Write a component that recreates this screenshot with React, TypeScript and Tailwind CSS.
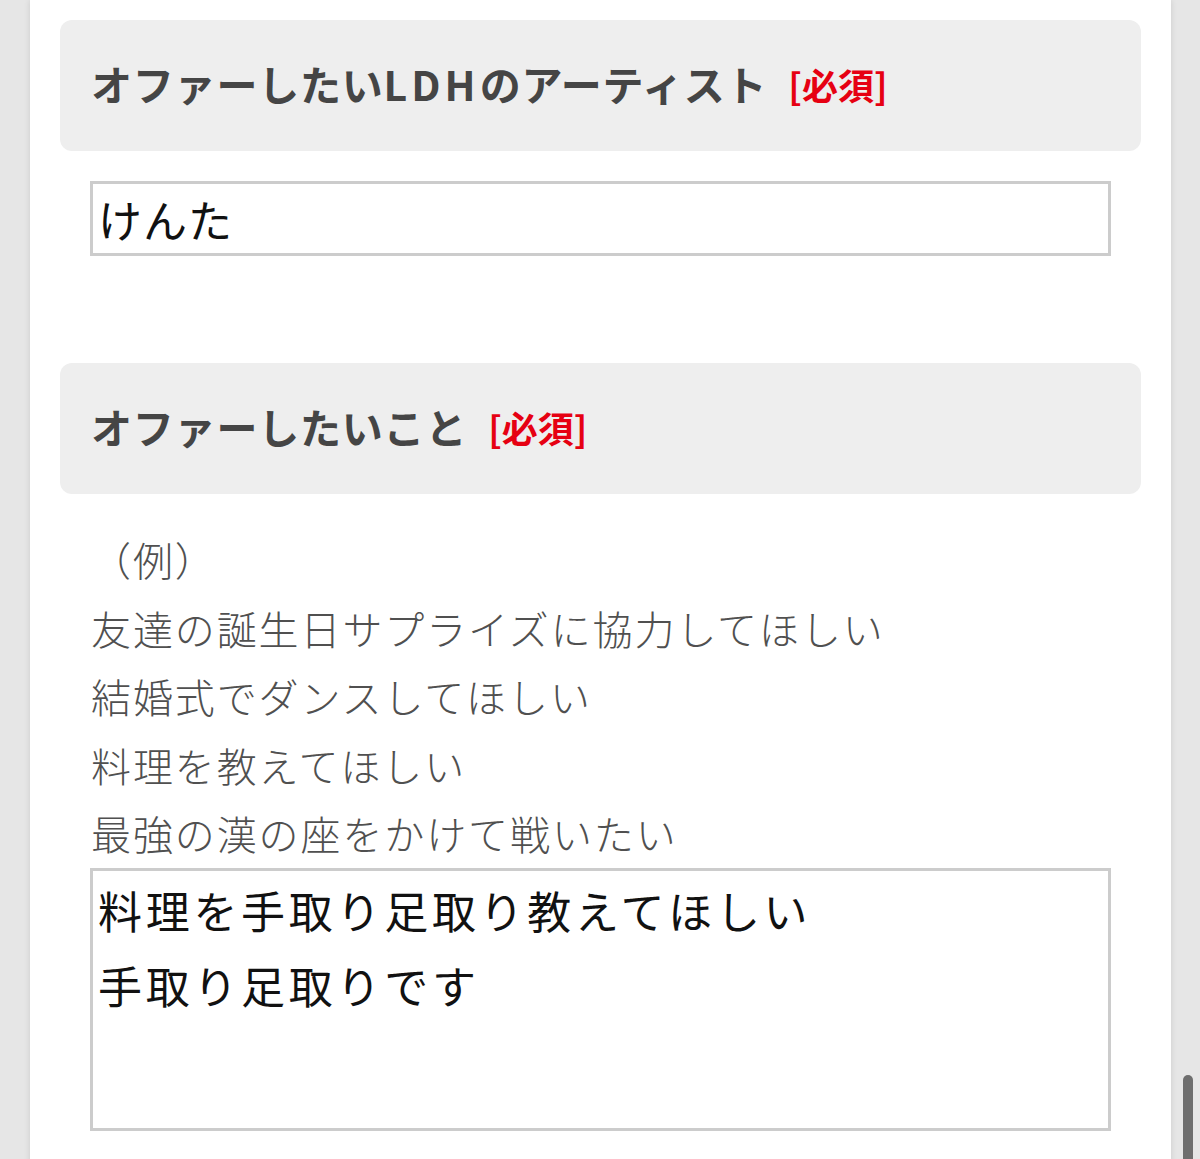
import React from 'react';

const jp = { fontFamily: '"Noto Sans CJK JP", "Noto Sans", sans-serif' };

interface FieldHeadProps {
  children: React.ReactNode;
}

function FieldHead({ children }: FieldHeadProps) {
  return (
    <div className="h-[131px] rounded-[12px] bg-[#eeeeee] flex items-center pl-[31px] pb-[4px]">
      <span className="text-[41px] font-bold text-[#454545] leading-none tracking-[0.8px]">{children}</span>
      <span className="ml-[21px] text-[36px] font-bold text-[#e60012] leading-none">[必須]</span>
    </div>
  );
}

const examples = [
  '（例）',
  '友達の誕生日サプライズに協力してほしい',
  '結婚式でダンスしてほしい',
  '料理を教えてほしい',
  '最強の漢の座をかけて戦いたい',
];

export default function App() {
  return (
    <div className="relative min-h-screen bg-[#e6e6e6] flex" style={jp}>
      <div className="ml-[30px] w-[1141px] min-h-[1159px] bg-white px-[30px] pt-[20px] pb-[40px] shadow-[0_0_6px_rgba(0,0,0,0.12)]">
        <FieldHead>
          オファーしたい<span className="tracking-[4px]">LDH</span>のアーティスト
        </FieldHead>
        <div className="mt-[30px] mx-[30px] h-[75px] border-[3px] border-[#cccccc] flex items-center px-[5px]">
          <span className="text-[44px] text-[#111] leading-none tracking-[1px]">けんた</span>
        </div>

        <div className="mt-[107px]">
          <FieldHead>オファーしたいこと</FieldHead>
        </div>

        <div className="mt-[31px] px-[31px] text-[40px] leading-[68.5px] text-[#505050] font-light tracking-[1.9px]">
          {examples.map((line) => (
            <div key={line}>{line}</div>
          ))}
        </div>

        <div className="mx-[30px] h-[263px] border-[3px] border-[#cccccc] px-[5px] pt-[2px]">
          <div className="text-[44px] leading-[75px] text-[#111] tracking-[3.7px]">
            <div>料理を手取り足取り教えてほしい</div>
            <div>手取り足取りです</div>
          </div>
        </div>
      </div>

      <div className="absolute right-[7px] top-[1075px] w-[10px] h-[90px] rounded-full bg-[#6e6e6e]" />
    </div>
  );
}
